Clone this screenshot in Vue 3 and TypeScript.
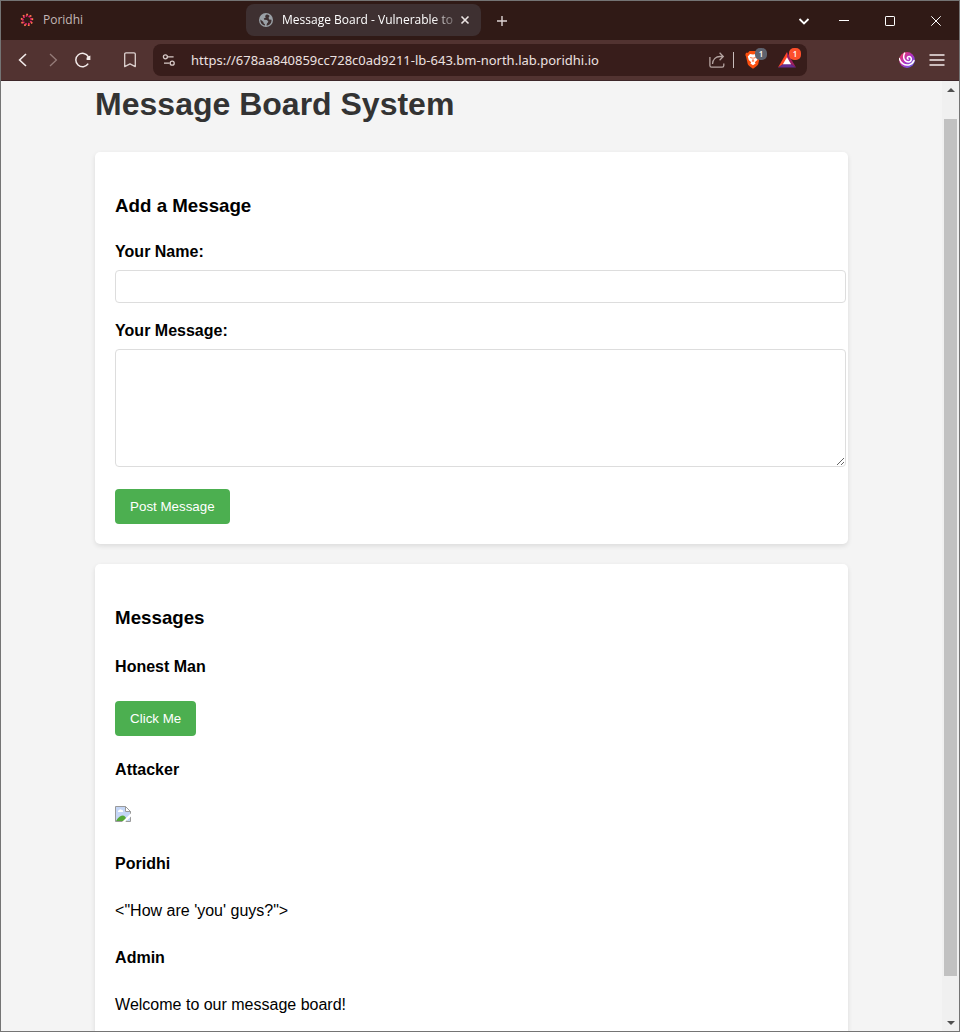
<script setup lang="ts">
import { ref } from 'vue'

interface Message {
  author: string
  kind: 'button' | 'image' | 'text'
  body: string
}

const address = ref('https://678aa840859cc728c0ad9211-lb-643.bm-north.lab.poridhi.io')
const name = ref('')
const message = ref('')
const messages = ref<Message[]>([
  { author: 'Honest Man', kind: 'button', body: 'Click Me' },
  { author: 'Attacker', kind: 'image', body: '' },
  { author: 'Poridhi', kind: 'text', body: `<"How are 'you' guys?">` },
  { author: 'Admin', kind: 'text', body: 'Welcome to our message board!' },
])

const petals = [0, 40, 80, 120, 160, 200, 240, 280, 320]

function post(): void {
  if (!name.value || !message.value) return
  messages.value.unshift({ author: name.value, kind: 'text', body: message.value })
  name.value = ''
  message.value = ''
}
</script>

<template>
  <div class="window">
    <header class="tab-strip">
      <button class="tab" type="button">
        <svg class="favicon" viewBox="0 0 14 14" width="14" height="14" aria-hidden="true">
          <g v-for="angle in petals" :key="angle" :transform="`rotate(${angle} 7 7)`">
            <path d="M6.2 3.6 L7.4 1" stroke="#e8246f" stroke-width="1.7" />
            <path d="M6.9 2.1 L7.5 .8" stroke="#f58a3c" stroke-width="1.5" />
          </g>
        </svg>
        <span class="tab-title">Poridhi</span>
      </button>
      <div class="tab active">
        <svg class="favicon" viewBox="0 0 14 14" width="14" height="14" aria-hidden="true">
          <circle cx="7" cy="7" r="7" fill="#9aa0a6" />
          <path d="M7.5 1.5 L6 3 L6.8 4.4 L4.8 5.6 L5.2 6.8 L8 7 L9.4 8.8 L8 10.4 L7.4 12.6 C10.8 12.5 12.7 9.8 12.5 6.8 L10 6.6 L9.6 4.6 L10.6 3 C9.8 2 8.8 1.5 7.5 1.5 Z M1.4 6.4 L4.2 8.8 L4.8 10.4 L6 11.2 L5.9 12.5 C3 12 1.1 9.4 1.4 6.4 Z" fill="#3e3031" />
        </svg>
        <span class="tab-title fade">Message Board - Vulnerable to</span>
        <button class="close" type="button" aria-label="Close tab">
          <svg viewBox="0 0 10 10" width="10" height="10"><path d="M1.5 1.5 L8.5 8.5 M8.5 1.5 L1.5 8.5" stroke="#ece4e3" stroke-width="1.6" /></svg>
        </button>
      </div>
      <button class="new-tab" type="button" aria-label="New tab">
        <svg viewBox="0 0 12 12" width="12" height="12"><path d="M6 1 V11 M1 6 H11" stroke="#ddd4d3" stroke-width="1.4" /></svg>
      </button>
      <div class="window-controls">
        <button type="button" aria-label="Search tabs">
          <svg viewBox="0 0 12 12" width="12" height="12"><path d="M1.5 4 L6 8.5 L10.5 4" fill="none" stroke="#fff" stroke-width="1.8" /></svg>
        </button>
        <button type="button" aria-label="Minimize">
          <svg viewBox="0 0 10 10" width="10" height="10"><path d="M0 4.5 H10" stroke="#fff" /></svg>
        </button>
        <button type="button" aria-label="Maximize">
          <svg viewBox="0 0 10 10" width="10" height="10"><rect x=".5" y=".5" width="9" height="9" rx=".6" fill="none" stroke="#fff" /></svg>
        </button>
        <button type="button" aria-label="Close window">
          <svg viewBox="0 0 10 10" width="10" height="10"><path d="M.3 .3 L9.7 9.7 M9.7 .3 L.3 9.7" stroke="#fff" /></svg>
        </button>
      </div>
    </header>

    <nav class="toolbar" aria-label="Navigation">
      <button class="tool" type="button" aria-label="Back">
        <svg viewBox="0 0 16 16" width="16" height="16"><path d="M11 2 L4.6 8 L11 14" fill="none" stroke="#f3ebea" stroke-width="1.6" /></svg>
      </button>
      <button class="tool" type="button" aria-label="Forward">
        <svg viewBox="0 0 16 16" width="16" height="16"><path d="M5 2 L11.4 8 L5 14" fill="none" stroke="#957c79" stroke-width="1.3" /></svg>
      </button>
      <button class="tool" type="button" aria-label="Reload">
        <svg viewBox="0 0 16 16" width="16" height="16">
          <path d="M13.4 4.8 A6.7 6.7 0 1 0 13.2 11.6" fill="none" stroke="#f3ebea" stroke-width="1.5" />
          <path d="M15.4 3.6 V8 H11.6 Q10.8 5.6 13 4.6 Z" fill="#f3ebea" />
        </svg>
      </button>
      <button class="tool bookmark" type="button" aria-label="Bookmark this page">
        <svg viewBox="0 0 16 16" width="16" height="16"><path d="M4 .8 H12 Q13.3 .8 13.3 2.1 V14.6 L8 11.9 L2.7 14.6 V2.1 Q2.7 .8 4 .8 Z" fill="none" stroke="#ddd1cf" stroke-width="1.3" stroke-linejoin="round" /></svg>
      </button>
      <div class="address-bar">
        <button class="tool site" type="button" aria-label="Site settings">
          <svg viewBox="0 0 14 14" width="14" height="14" fill="none" stroke="#d8cac8" stroke-width="1.3">
            <circle cx="3.4" cy="3.8" r="2" /><path d="M5.6 3.8 H11.6 M2 10.2 H7.6" /><circle cx="10.2" cy="10.2" r="2" />
          </svg>
        </button>
        <input v-model="address" class="url" type="text" aria-label="Address" spellcheck="false" />
        <button class="tool share" type="button" aria-label="Share">
          <svg viewBox="0 0 16 16" width="16" height="16" fill="none" stroke="#b5a4a1" stroke-width="1.3">
            <path d="M.9 5 V13.6 Q.9 15.2 2.5 15.2 H13.2 Q14.8 15.2 14.8 13.6 V11.4" />
            <path d="M3.5 12 C3.8 7.2 7 4.5 11 4.5 H14 M10.6 .8 L14.3 4.5 L10.6 8.2" />
          </svg>
        </button>
        <span class="divider"></span>
        <button class="tool shield" type="button" aria-label="Shields">
          <svg viewBox="0 0 16 18" width="16" height="18">
            <path d="M4.5 0 H11.5 L13 1.7 L15 1.8 L15.7 4 L15 5.5 L13.2 13.2 Q12.8 14.5 8 17.8 Q3.2 14.5 2.8 13.2 L1 5.5 L.3 4 L1 1.8 L3 1.7 Z" fill="#fb5010" />
            <path d="M5 3 L8 3.6 L11 3 L13.2 5.5 L12.2 9 L9.8 11.2 L10.6 12.4 L8 14.3 L5.4 12.4 L6.2 11.2 L3.8 9 L2.8 5.5 Z" fill="#fff" />
            <path d="M4.8 6 L7 6.5 L6.2 7.8 Z M11.2 6 L9 6.5 L9.8 7.8 Z M6.5 10 L8 10.8 L9.5 10 L8 9 Z M7.6 6.3 H8.4 V9.2 H7.6 Z" fill="#fb5010" />
          </svg>
          <span class="badge">1</span>
        </button>
        <button class="tool rewards" type="button" aria-label="Rewards">
          <svg viewBox="0 0 18 16" width="18" height="16">
            <path d="M9 0 L0 15.5 L9 10 Z" fill="#ff4724" />
            <path d="M9 0 L18 15.5 L9 10 Z" fill="#9e1f63" />
            <path d="M0 15.5 H18 L9 9.6 Z" fill="#662d91" />
            <path d="M9 5.2 L4.9 12.3 H13.1 Z" fill="#fff" />
          </svg>
          <span class="badge hot">1</span>
        </button>
      </div>
      <button class="tool assistant" type="button" aria-label="Assistant">
        <svg viewBox="0 0 16 16" width="16" height="16">
          <defs>
            <linearGradient id="swirl" x1="0" y1="0" x2="1" y2="1">
              <stop offset="0" stop-color="#fa3a4e" /><stop offset=".5" stop-color="#b02fc0" /><stop offset="1" stop-color="#5268f0" />
            </linearGradient>
          </defs>
          <circle cx="8" cy="8" r="7.9" fill="url(#swirl)" />
          <path d="M5.6 1.2 C3.6 5 5 9.9 9.4 9.9 C13.2 9.8 13.2 4.6 10 4.6 C8.2 4.6 7.8 6.6 9.2 7.1 M.3 6.6 C1.6 11.6 5.8 13.8 9.8 12.9 C12.2 12.4 14 10.8 15 8.6" fill="none" stroke="#fff" stroke-width="1.5" stroke-linecap="round" />
        </svg>
      </button>
      <button class="tool" type="button" aria-label="Menu">
        <svg viewBox="0 0 16 12" width="16" height="12"><path d="M.5 1 H15.5 M.5 6 H15.5 M.5 11 H15.5" stroke="#f3ebea" stroke-width="1.3" /></svg>
      </button>
    </nav>

    <div class="viewport">
      <main class="page">
        <div class="container">
          <h1>Message Board System</h1>
          <form class="card" @submit.prevent="post">
            <h3>Add a Message</h3>
            <label for="name">Your Name:</label>
            <input id="name" v-model="name" class="field" type="text" />
            <label for="message">Your Message:</label>
            <textarea id="message" v-model="message" class="field"></textarea>
            <button class="action" type="submit">Post Message</button>
          </form>
          <section class="card">
            <h3>Messages</h3>
            <article v-for="item in messages" :key="item.author" class="message">
              <h4>{{ item.author }}</h4>
              <div class="body" :class="item.kind">
                <button v-if="item.kind === 'button'" class="action" type="button">{{ item.body }}</button>
                <svg v-else-if="item.kind === 'image'" viewBox="0 0 16 16" width="16" height="16" role="img" aria-label="Broken image">
                  <path d="M.5 .5 H10.5 L15.5 5.5 V15.5 H.5 Z" fill="#c4d6f6" />
                  <path d="M1 15 C3 11 6 9.5 8 9.5 C10 9.5 11.5 12 12 15 Z" fill="#54a838" />
                  <path d="M3 6 Q2.4 4.5 4 4.3 Q5 2.4 6.5 3.8 Q8.4 3.8 8.2 6 Z" fill="#fff" />
                  <path d="M.5 15.5 V.5 H10.5 L15.5 5.5 V15.5 Z" fill="none" stroke="#9a9a9a" />
                  <path d="M10.5 .5 V5.5 H15.5 Z" fill="#fff" stroke="#9a9a9a" />
                  <path d="M16 7.2 L7 16 H10.2 L16 10.4 Z" fill="#fff" />
                </svg>
                <template v-else>{{ item.body }}</template>
              </div>
            </article>
          </section>
        </div>
      </main>
      <div class="scrollbar" aria-hidden="true">
        <span class="arrow"><svg viewBox="0 0 8 4" width="8" height="4"><path d="M0 4 L4 0 L8 4 Z" fill="#505050" /></svg></span>
        <span class="before"></span>
        <span class="thumb"></span>
        <span class="after"></span>
        <span class="arrow"><svg viewBox="0 0 8 4" width="8" height="4"><path d="M0 0 L4 4 L8 0 Z" fill="#505050" /></svg></span>
      </div>
    </div>
  </div>
</template>

<style>
body {
  margin: 0;
}
</style>

<style scoped>
.window {
  box-sizing: border-box;
  height: 100vh;
  display: flex;
  flex-direction: column;
  overflow: hidden;
  border: 1px solid #747474;
  font-family: "Open Sans", "Noto Sans", sans-serif;
}
.tab-strip button,
.toolbar button {
  padding: 0;
  border: 0;
  background: none;
  font: inherit;
  color: inherit;
}
svg {
  display: block;
  flex: none;
}
.tab-strip {
  flex: none;
  height: 39px;
  display: flex;
  align-items: center;
  background: #301a16;
  color: #c4b8b6;
  font-size: 12px;
}
.tab-strip .tab {
  box-sizing: border-box;
  width: 235px;
  height: 32px;
  margin: 0 0 2px 7px;
  padding: 0 12px;
  display: flex;
  align-items: center;
  gap: 9px;
  text-align: left;
}
.tab-strip .tab.active {
  margin-left: 3px;
  padding: 0 9px 0 13px;
  border-radius: 8px;
  background: #3e3031;
  color: #fff;
}
.tab-title {
  flex: 1;
  min-width: 0;
  white-space: nowrap;
}
.fade {
  mask-image: linear-gradient(to right, #000 88%, rgba(0, 0, 0, 0.3));
}
.tab-strip .close,
.tab-strip .new-tab {
  display: flex;
  align-items: center;
  justify-content: center;
}
.tab-strip .close {
  width: 14px;
  height: 14px;
  margin-left: -4px;
}
.tab-strip .new-tab {
  width: 28px;
  height: 28px;
  margin-left: 7px;
}
.window-controls {
  display: flex;
  align-items: center;
  align-self: stretch;
  margin-left: auto;
}
.window-controls button {
  width: 46px;
  height: 100%;
  display: flex;
  align-items: center;
  justify-content: center;
}
.window-controls button:first-child {
  width: 34px;
}
.toolbar {
  flex: none;
  height: 40px;
  display: flex;
  align-items: center;
  padding: 0 7px;
  background: #523331;
  border-bottom: 1px solid #3d2629;
}
.toolbar .tool {
  position: relative;
  flex: none;
  width: 30px;
  height: 30px;
  display: flex;
  align-items: center;
  justify-content: center;
}
.toolbar .site {
  width: 32px;
}
.bookmark {
  margin-left: 17px;
}
.address-bar {
  flex: 1;
  min-width: 0;
  height: 32px;
  margin-left: 8px;
  display: flex;
  align-items: center;
  border-radius: 8px;
  background: #381d1b;
}
.url {
  flex: 1;
  min-width: 0;
  margin-left: 6px;
  padding: 0;
  border: 0;
  outline: 0;
  background: none;
  color: #ece1e0;
  font: 13px "Noto Sans", "Open Sans", sans-serif;
}
.divider {
  width: 1px;
  height: 16px;
  margin: 0 4px 0 1px;
  background: #c8bcba;
}
.rewards {
  margin: 0 5px 0 4px;
}
.badge {
  position: absolute;
  top: 3px;
  right: 1px;
  width: 12px;
  height: 12px;
  border-radius: 5px;
  background: #5f636f;
  color: #fff;
  font-size: 8px;
  font-weight: 600;
  line-height: 12px;
  text-align: center;
}
.badge.hot {
  background: #fc4f2b;
}
.assistant {
  margin-left: 85px;
}
.viewport {
  flex: 1;
  min-height: 0;
  display: flex;
}
.page {
  flex: 1;
  min-width: 0;
  overflow: hidden;
  background: #f4f4f4;
  color: #000;
  font: 16px/26px Arial, "Liberation Sans", sans-serif;
}
.container {
  width: 80%;
  margin: 0 auto;
}
h1 {
  margin: 0 0 25px;
  color: #333;
  line-height: 46px;
}
h3 {
  margin: 19px 0 18px;
  line-height: 30px;
}
.card {
  display: flow-root;
  margin-bottom: 20px;
  padding: 20px;
  border-radius: 5px;
  background: #fff;
  box-shadow: 0 2px 5px rgba(0, 0, 0, 0.1);
}
label {
  display: block;
  margin-bottom: 5px;
  font-weight: bold;
}
.field {
  display: block;
  box-sizing: content-box;
  width: 100%;
  height: 15px;
  margin: 0 0 15px;
  padding: 8px;
  border: 1px solid #ddd;
  border-radius: 4px;
  background: #fff;
}
textarea.field {
  height: 100px;
  margin-bottom: 22px;
}
.action {
  display: block;
  height: 35px;
  padding: 0 15px;
  border: 0;
  border-radius: 4px;
  background: #4caf50;
  color: #fff;
  font-family: Arial, "Liberation Sans", sans-serif;
}
h4 {
  margin: 21px 0;
}
.body {
  box-sizing: border-box;
  min-height: 26px;
  margin: 21px 0;
}
.body.image {
  padding-top: 2px;
}
.scrollbar {
  flex: none;
  width: 17px;
  display: flex;
  flex-direction: column;
  background: #f0f0f0;
}
.arrow {
  height: 17px;
  display: flex;
  align-items: center;
  justify-content: center;
}
.before {
  flex: 21;
}
.thumb {
  flex: 857;
  margin: 0 2px;
  background: #c1c1c1;
}
.after {
  flex: 38;
}
</style>
